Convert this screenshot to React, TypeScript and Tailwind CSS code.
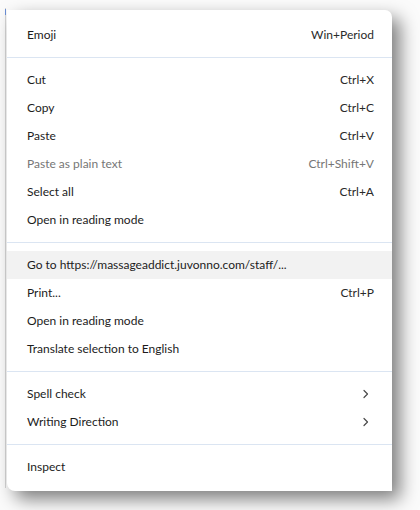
import React from "react";

type Item = { label: string; shortcut?: string; disabled?: boolean; sub?: boolean; hover?: boolean };

const groups: Item[][] = [
  [{ label: "Emoji", shortcut: "Win+Period" }],
  [
    { label: "Cut", shortcut: "Ctrl+X" },
    { label: "Copy", shortcut: "Ctrl+C" },
    { label: "Paste", shortcut: "Ctrl+V" },
    { label: "Paste as plain text", shortcut: "Ctrl+Shift+V", disabled: true },
    { label: "Select all", shortcut: "Ctrl+A" },
    { label: "Open in reading mode" },
  ],
  [
    { label: "Go to https://massageaddict.juvonno.com/staff/...", hover: true },
    { label: "Print...", shortcut: "Ctrl+P" },
    { label: "Open in reading mode" },
    { label: "Translate selection to English" },
  ],
  [
    { label: "Spell check", sub: true },
    { label: "Writing Direction", sub: true },
  ],
  [{ label: "Inspect" }],
];

function Chevron() {
  return (
    <svg width="8" height="10" viewBox="0 0 8 10" fill="none" className="mr-[4px]">
      <path d="M2 1.5 L5.5 5 L2 8.5" stroke="#4a4a4a" strokeWidth="1.2" strokeLinecap="round" strokeLinejoin="round" />
    </svg>
  );
}

function Row({ item }: { item: Item }) {
  const color = item.disabled ? "text-[#767676]" : "text-[#1c1c1c]";
  return (
    <div
      className={`flex h-[28px] items-center justify-between pl-[20px] pr-[18px] ${item.hover ? "bg-[#f2f2f2]" : ""} ${color}`}
    >
      <span>{item.label}</span>
      {item.shortcut && <span className={item.disabled ? "text-[#767676]" : "text-[#2a2a2a]"}>{item.shortcut}</span>}
      {item.sub && <Chevron />}
    </div>
  );
}

export default function App() {
  return (
    <div
      className="relative h-[510px] w-[420px] overflow-hidden bg-[#fbfbfb]"
      style={{ fontFamily: 'Lato, "Noto Sans", sans-serif' }}
    >
      <div className="absolute left-[5px] top-[8px] h-[480px] w-px bg-[#d4d4d4]" />
      <div className="absolute left-[5px] top-[9px] h-[6px] w-px bg-[#6b8fd6]" />
      <div className="absolute left-[7px] top-[10px] w-[385px] rounded-tr-[7px] rounded-bl-[8px] bg-white pt-[11px] pb-[10px] text-[12px] shadow-[8px_8px_18px_rgba(0,0,0,0.5)]">
        {groups.map((g, gi) => (
          <div key={gi}>
            {gi > 0 && <div className="my-[8px] h-px bg-[#dbe5f2]" />}
            {g.map((it, i) => (
              <Row key={i} item={it} />
            ))}
          </div>
        ))}
      </div>
    </div>
  );
}
